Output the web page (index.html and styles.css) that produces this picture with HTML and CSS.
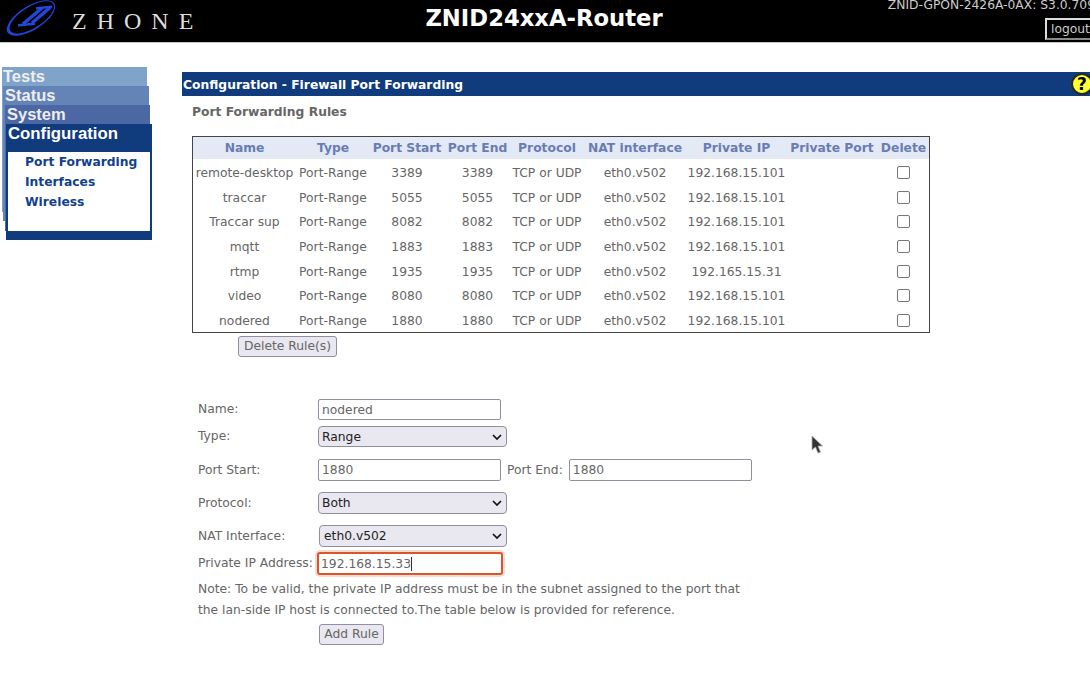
FILE: index.html
```html
<!DOCTYPE html>
<html lang="en">

<head>
    <meta charset="UTF-8">
    <meta name="viewport" content="width=device-width, initial-scale=1.0">
    <title>ZNID24xxA-Router</title>
    <link rel="stylesheet" href="styles.css">
</head>

<body>
    <div class="page">
        <header class="topbar">
            <div class="brand">
                <svg class="logo" viewBox="0 0 50 38" width="50" height="38">
                    <ellipse cx="25" cy="18" rx="27.5" ry="12" transform="rotate(-32 25 18)" fill="#1f45d6"/>
                    <ellipse cx="25.8" cy="17.4" rx="25.3" ry="10.5" transform="rotate(-32 25.8 17.4)" fill="#000"/>
                    <path d="M36 8L17 24M44 7.5L26 23" stroke="#2148dc" stroke-width="3.4" fill="none"/>
                    <path d="M30 8.2L46 6.8M12 25.2L29 23.8" stroke="#2148dc" stroke-width="2.4" fill="none"/>
                </svg>
                <span class="brand-name">ZHONE</span>
            </div>
            <div class="product">ZNID24xxA-Router</div>
            <div class="device">
                <div class="device-name">ZNID-GPON-2426A-0AX: S3.0.709</div>
                <button class="logout" type="button">logout</button>
            </div>
        </header>

        <div class="container">
            <nav class="tabs">
                <div class="tab tab-tests"><a href="#">Tests</a></div>
                <div class="tab tab-status"><a href="#">Status</a></div>
                <div class="tab tab-system"><a href="#">System</a></div>
                <div class="tab tab-config">
                    <a href="#">Configuration</a>
                    <ul>
                        <li><a href="#">Port Forwarding</a></li>
                        <li><a href="#">Interfaces</a></li>
                        <li><a href="#">Wireless</a></li>
                    </ul>
                </div>
            </nav>

            <main class="main-content">
                <div class="title-bar">
                    <span>Configuration - Firewall Port Forwarding</span>
                    <span class="help">?</span>
                </div>
                <h2>Port Forwarding Rules</h2>

                <table class="rules">
                    <colgroup>
                        <col class="c-name"><col class="c-type"><col class="c-start"><col class="c-end"><col class="c-proto"><col class="c-nat"><col class="c-ip"><col class="c-port"><col class="c-del">
                    </colgroup>
                    <thead>
                        <tr><th>Name</th><th>Type</th><th>Port Start</th><th>Port End</th><th>Protocol</th><th>NAT interface</th><th>Private IP</th><th>Private Port</th><th>Delete</th></tr>
                    </thead>
                    <tbody>
                        <tr><td>remote-desktop</td><td>Port-Range</td><td>3389</td><td>3389</td><td>TCP or UDP</td><td>eth0.v502</td><td>192.168.15.101</td><td></td><td><span class="check"></span></td></tr>
                        <tr><td>traccar</td><td>Port-Range</td><td>5055</td><td>5055</td><td>TCP or UDP</td><td>eth0.v502</td><td>192.168.15.101</td><td></td><td><span class="check"></span></td></tr>
                        <tr><td>Traccar sup</td><td>Port-Range</td><td>8082</td><td>8082</td><td>TCP or UDP</td><td>eth0.v502</td><td>192.168.15.101</td><td></td><td><span class="check"></span></td></tr>
                        <tr><td>mqtt</td><td>Port-Range</td><td>1883</td><td>1883</td><td>TCP or UDP</td><td>eth0.v502</td><td>192.168.15.101</td><td></td><td><span class="check"></span></td></tr>
                        <tr><td>rtmp</td><td>Port-Range</td><td>1935</td><td>1935</td><td>TCP or UDP</td><td>eth0.v502</td><td>192.165.15.31</td><td></td><td><span class="check"></span></td></tr>
                        <tr><td>video</td><td>Port-Range</td><td>8080</td><td>8080</td><td>TCP or UDP</td><td>eth0.v502</td><td>192.168.15.101</td><td></td><td><span class="check"></span></td></tr>
                        <tr><td>nodered</td><td>Port-Range</td><td>1880</td><td>1880</td><td>TCP or UDP</td><td>eth0.v502</td><td>192.168.15.101</td><td></td><td><span class="check"></span></td></tr>
                    </tbody>
                </table>
                <button class="btn btn-delete" type="button">Delete Rule(s)</button>

                <form class="rule-form">
                    <div class="row row-name">
                        <label>Name:</label>
                        <div class="field field-text">nodered</div>
                    </div>
                    <div class="row row-type">
                        <label>Type:</label>
                        <div class="field field-select">Range<svg class="chev" viewBox="0 0 10 6" width="10" height="6"><path d="M1 1L5 5L9 1" fill="none" stroke="#111" stroke-width="1.7"/></svg></div>
                    </div>
                    <div class="row row-ports">
                        <label>Port Start:</label>
                        <div class="field field-text">1880</div>
                        <label class="label-end">Port End:</label>
                        <div class="field field-text field-end">1880</div>
                    </div>
                    <div class="row row-proto">
                        <label>Protocol:</label>
                        <div class="field field-select">Both<svg class="chev" viewBox="0 0 10 6" width="10" height="6"><path d="M1 1L5 5L9 1" fill="none" stroke="#111" stroke-width="1.7"/></svg></div>
                    </div>
                    <div class="row row-nat">
                        <label>NAT Interface:</label>
                        <div class="field field-select field-nat">eth0.v502<svg class="chev" viewBox="0 0 10 6" width="10" height="6"><path d="M1 1L5 5L9 1" fill="none" stroke="#111" stroke-width="1.7"/></svg></div>
                    </div>
                    <div class="row row-ip">
                        <label>Private IP Address:</label>
                        <div class="field field-text field-focus">192.168.15.33<span class="caret"></span></div>
                    </div>
                    <p class="note">Note: To be valid, the private IP address must be in the subnet assigned to the port that<br>the lan-side IP host is connected to.The table below is provided for reference.</p>
                    <button class="btn btn-add" type="button">Add Rule</button>
                </form>
            </main>
        </div>

        <svg class="cursor" viewBox="0 0 12 20" width="12" height="20">
            <path d="M1 1V15L4.5 12L7 18L9.5 17L7 11H11.5Z" fill="#333" stroke="#aaa" stroke-width="0.8"/>
        </svg>
    </div>
</body>

</html>
```
FILE: styles.css
```css
/* Reset default margin and padding */
* {
    margin: 0;
    padding: 0;
    box-sizing: border-box;
}

body {
    font-family: "DejaVu Sans", sans-serif;
    font-size: 12.3px;
    background-color: #fff;
    color: #666;
    overflow: hidden;
    height: 698px;
}

/* The page runs past the right edge of the window */
.page {
    width: 1114px;
    position: relative;
}

/* Top bar */
.topbar {
    background-color: #000;
    height: 43px;
    border-bottom: 1px solid #c8c8c8;
    display: grid;
    grid-template-columns: 300px 488px 1fr;
}

.brand {
    display: flex;
    align-items: center;
    padding-left: 6px;
}

.logo {
    margin-right: 16px;
    align-self: flex-start;
}

.brand-name {
    font-family: "Liberation Serif", serif;
    font-size: 24px;
    letter-spacing: 10px;
    color: #ddd;
}

.product {
    color: #fff;
    font-weight: bold;
    font-size: 22.7px;
    text-align: center;
    line-height: 37px;
}

.device {
    color: #ccc;
    font-size: 12.3px;
    text-align: right;
}

.device-name {
    line-height: 10px;
    white-space: nowrap;
    padding-right: 19px;
}

.logout {
    display: block;
    margin: 8px 4px 0 auto;
    width: 65px;
    height: 22px;
    background: #000;
    color: #ccc;
    border: 2px outset #ddd;
    font: 12.3px "DejaVu Sans", sans-serif;
    text-align: left;
    padding-left: 4px;
}

/* Layout */
.container {
    display: flex;
}

/* Stacked navigation tabs */
.tabs {
    width: 182px;
    flex: none;
    display: grid;
    align-self: start;
    padding-top: 24px;
}

.tab {
    grid-area: 1 / 1;
    font-size: 16.5px;
    line-height: 19px;
}

.tab > a {
    color: #eee;
    font-family: "Liberation Sans", sans-serif;
    font-weight: bold;
    text-decoration: none;
    padding-left: 1px;
}

.tab-tests {
    margin-left: 2px;
    width: 145px;
    height: 145px;
    background-color: #7fa3c9;
}

.tab-status {
    margin: 19px 0 0 3px;
    width: 146px;
    height: 135px;
    background-color: #6484b8;
}

.tab-status > a,
.tab-system > a {
    padding-left: 2px;
}

.tab-system {
    margin: 38px 0 0 5px;
    width: 145px;
    height: 126px;
    background-color: #4c68a4;
}

.tab-config {
    margin: 57px 0 0 6px;
    width: 146px;
    height: 116px;
    background-color: #103b7c;
    padding: 0 2px;
}

.tab-config > a {
    font-size: 16.8px;
    line-height: 20px;
    color: #fff;
    padding-left: 0;
}

.tab-config ul {
    list-style-type: none;
    background-color: #fff;
    margin-top: 8px;
    height: 79px;
    padding-left: 17px;
}

.tab-config li {
    font-size: 12.3px;
    line-height: 20px;
}

.tab-config li a {
    color: #123f8f;
    font-weight: bold;
    text-decoration: none;
}

/* Main content */
.main-content {
    flex: 1;
    padding-top: 29px;
}

.title-bar {
    background-color: #103b7c;
    color: #fff;
    font-weight: bold;
    height: 24px;
    padding: 1px 0 0 1px;
    display: flex;
    justify-content: space-between;
    align-items: center;
}

.help {
    width: 22px;
    height: 22px;
    margin: -1px 21px 0 0;
    border: 2px solid #2a2a20;
    border-radius: 50%;
    background-color: #ffff33;
    color: #000;
    font-size: 17px;
    line-height: 18px;
    text-align: center;
}

h2 {
    font-size: 12.3px;
    color: #666;
    margin: 9px 0 0 10px;
    line-height: 14px;
}

/* Rules table */
.rules {
    margin: 17px 0 0 10px;
    width: 738px;
    border: 1px solid #444;
    border-collapse: separate;
    border-spacing: 0;
    table-layout: fixed;
    text-align: center;
}

.c-name { width: 103px; }
.c-type { width: 74px; }
.c-start { width: 74px; }
.c-end { width: 67px; }
.c-proto { width: 72px; }
.c-nat { width: 104px; }
.c-ip { width: 99px; }
.c-port { width: 92px; }

.rules th {
    background-color: #e4e9f6;
    color: #6a7cb4;
    height: 22px;
    white-space: nowrap;
    font-weight: bold;
}

.rules td {
    height: 24.7px;
    white-space: nowrap;
    padding-top: 3px;
}

.check {
    display: inline-block;
    width: 13px;
    height: 13px;
    border: 1px solid #777;
    border-radius: 2px;
    background: #fff;
    vertical-align: middle;
    margin-top: -2px;
}

/* Buttons */
.btn {
    display: block;
    background-color: #e9e7ef;
    border: 1px solid #8f8f9d;
    border-radius: 3px;
    color: #666;
    font: 12.3px "DejaVu Sans", sans-serif;
    height: 21px;
}

.btn-delete {
    margin: 3px 0 0 56px;
    width: 99px;
}

.btn-add {
    margin: 3px 0 0 121px;
    width: 65px;
}

/* Add rule form */
.rule-form {
    margin: 42px 0 0 16px;
}

.row {
    display: flex;
    align-items: center;
    height: 21px;
}

.row label {
    width: 120px;
    flex: none;
    white-space: nowrap;
}

.field {
    height: 21px;
    line-height: 20px;
    white-space: nowrap;
}

.field-text {
    width: 183px;
    border: 1px solid #8f8f9d;
    border-radius: 2px;
    padding-left: 3px;
    background: #fff;
}

.field-select {
    width: 189px;
    background-color: #e9e7ef;
    border: 1px solid #8f8f9d;
    border-radius: 4px;
    padding: 0 4px 0 3px;
    color: #222;
    display: flex;
    align-items: center;
    justify-content: space-between;
}

.row-type { margin-top: 6px; }
.row-type .field-select { padding-top: 1px; }
.row-ports { margin-top: 12px; height: 22px; }
.row-ports .field { height: 22px; }
.row-proto { margin-top: 11px; height: 22px; }
.row-proto .field { height: 22px; }
.row-nat { margin-top: 11px; height: 22px; }
.row-nat .field { height: 22px; }
.row-ip { margin-top: 5px; height: 23px; }

.row .label-end {
    width: auto;
    margin: 0 6px;
}

.field-nat {
    margin-left: 1px;
    width: 188px;
    padding-left: 4px;
}

.field-focus {
    height: 23px;
    line-height: 20px;
    width: 186px;
    border: 2px solid #d9552d;
    box-shadow: 0 0 0 2px #f8d9cd;
    border-radius: 3px;
    margin-left: -1px;
    padding-left: 2px;
}

.caret {
    display: inline-block;
    width: 1px;
    height: 14px;
    background: #333;
    vertical-align: -3px;
}

.note {
    line-height: 21px;
    margin-top: 4px;
}

/* Mouse pointer in the screenshot */
.cursor {
    position: absolute;
    left: 811px;
    top: 435px;
}
```
